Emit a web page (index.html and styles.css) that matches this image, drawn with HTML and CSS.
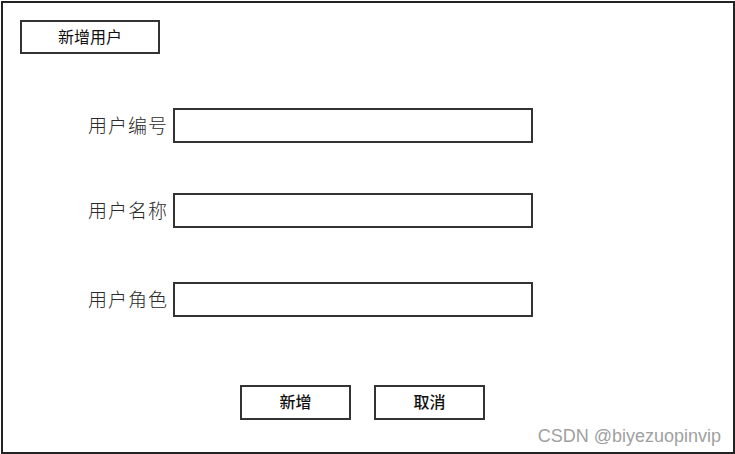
FILE: index.html
```html
<!DOCTYPE html>
<html lang="zh">
<head>
<meta charset="utf-8">
<link rel="stylesheet" href="styles.css">
</head>
<body>
<div class="frame">
  <div class="title-btn">新增用户</div>
  <div class="form">
    <div class="row r1"><label class="lbl">用户编号</label><div class="input"></div></div>
    <div class="row r2"><label class="lbl">用户名称</label><div class="input"></div></div>
    <div class="row r3"><label class="lbl">用户角色</label><div class="input"></div></div>
  </div>
  <div class="actions">
    <div class="btn">新增</div>
    <div class="btn">取消</div>
  </div>
  <div class="watermark">CSDN @biyezuopinvip</div>
</div>
</body>
</html>
```
FILE: styles.css
```css
html, body { margin: 0; padding: 0; background: #fff; }
body { font-family: "Noto Sans CJK SC", "Noto Sans", sans-serif; color: #222; }
.frame {
  position: relative;
  margin: 1px 0 0 1px;
  width: 734px;
  height: 453px;
  box-sizing: border-box;
  border: 2px solid #222;
  padding: 17px 0 0 17px;
}
.title-btn {
  width: 140px;
  height: 34px;
  box-sizing: border-box;
  border: 2px solid #333;
  padding-bottom: 2px;
  display: flex;
  align-items: center;
  justify-content: center;
  font-size: 16px;
  color: #111;
}
.form { display: flex; flex-direction: column; }
.row { display: flex; align-items: center; height: 35px; }
.r1 { margin-top: 54px; }
.r2 { margin-top: 50px; }
.r3 { margin-top: 54px; }
.lbl {
  width: 153px;
  padding-right: 5px;
  padding-bottom: 2px;
  box-sizing: border-box;
  text-align: right;
  font-size: 19px;
  font-weight: 300;
  color: #2a2a2a;
  letter-spacing: 1px;
}
.input {
  width: 360px;
  height: 35px;
  box-sizing: border-box;
  border: 2px solid #333;
}
.actions {
  display: flex;
  gap: 23px;
  margin-top: 68px;
  padding-left: 220px;
}
.btn {
  width: 111px;
  height: 35px;
  box-sizing: border-box;
  border: 2px solid #333;
  padding-bottom: 3px;
  display: flex;
  align-items: center;
  justify-content: center;
  font-size: 16px;
  font-weight: 500;
  color: #111;
}
.watermark {
  position: absolute;
  right: 12px;
  bottom: 5px;
  font-family: "Liberation Sans", Arial, sans-serif;
  font-size: 18px;
  color: #a0a0a0;
}
```
